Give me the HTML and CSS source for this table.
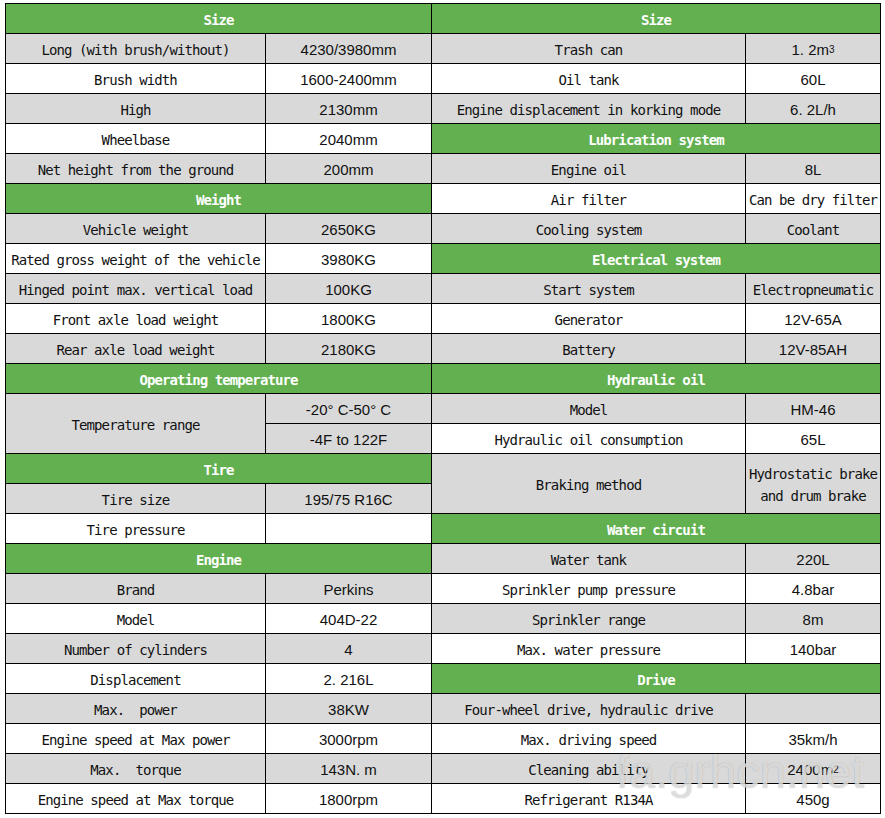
FILE: index.html
```html
<!DOCTYPE html>
<html lang="en">
<head>
<meta charset="utf-8">
<title>Specifications</title>
<link rel="stylesheet" href="styles.css">
</head>
<body>
<div class="sheet">
  <div class="spec spec-left">
    <div class="hd">Size</div>
    <div class="row g"><div class="cell">Long (with brush/without)</div><div class="cell num">4230/3980mm</div></div>
    <div class="row"><div class="cell">Brush width</div><div class="cell num">1600-2400mm</div></div>
    <div class="row g"><div class="cell">High</div><div class="cell num">2130mm</div></div>
    <div class="row"><div class="cell">Wheelbase</div><div class="cell num">2040mm</div></div>
    <div class="row g"><div class="cell">Net height from the ground</div><div class="cell num">200mm</div></div>
    <div class="hd">Weight</div>
    <div class="row g"><div class="cell">Vehicle weight</div><div class="cell num">2650KG</div></div>
    <div class="row"><div class="cell">Rated gross weight of the vehicle</div><div class="cell num">3980KG</div></div>
    <div class="row g"><div class="cell">Hinged point max. vertical load</div><div class="cell num">100KG</div></div>
    <div class="row"><div class="cell">Front axle load weight</div><div class="cell num">1800KG</div></div>
    <div class="row g"><div class="cell">Rear axle load weight</div><div class="cell num">2180KG</div></div>
    <div class="hd">Operating temperature</div>
    <div class="row g"><div class="cell span2">Temperature range</div><div class="cell num">-20° C-50° C</div><div class="cell num">-4F to 122F</div></div>
    <div class="hd">Tire</div>
    <div class="row g"><div class="cell">Tire size</div><div class="cell num">195/75 R16C</div></div>
    <div class="row"><div class="cell">Tire pressure</div><div class="cell"></div></div>
    <div class="hd">Engine</div>
    <div class="row g"><div class="cell">Brand</div><div class="cell num">Perkins</div></div>
    <div class="row"><div class="cell">Model</div><div class="cell num">404D-22</div></div>
    <div class="row g"><div class="cell">Number of cylinders</div><div class="cell num">4</div></div>
    <div class="row"><div class="cell">Displacement</div><div class="cell num">2. 216L</div></div>
    <div class="row g"><div class="cell">Max.  power</div><div class="cell num">38KW</div></div>
    <div class="row"><div class="cell">Engine speed at Max power</div><div class="cell num">3000rpm</div></div>
    <div class="row g"><div class="cell">Max.  torque</div><div class="cell num">143N. m</div></div>
    <div class="row"><div class="cell">Engine speed at Max torque</div><div class="cell num">1800rpm</div></div>
  </div>
  <div class="spec spec-right">
    <div class="hd">Size</div>
    <div class="row g"><div class="cell">Trash can</div><div class="cell num">1. 2m<sup>3</sup></div></div>
    <div class="row"><div class="cell">Oil tank</div><div class="cell num">60L</div></div>
    <div class="row g"><div class="cell">Engine displacement in korking mode</div><div class="cell num">6. 2L/h</div></div>
    <div class="hd">Lubrication system</div>
    <div class="row g"><div class="cell">Engine oil</div><div class="cell num">8L</div></div>
    <div class="row"><div class="cell">Air filter</div><div class="cell">Can be dry filter</div></div>
    <div class="row g"><div class="cell">Cooling system</div><div class="cell">Coolant</div></div>
    <div class="hd">Electrical system</div>
    <div class="row g"><div class="cell">Start system</div><div class="cell">Electropneumatic</div></div>
    <div class="row"><div class="cell">Generator</div><div class="cell num">12V-65A</div></div>
    <div class="row g"><div class="cell">Battery</div><div class="cell num">12V-85AH</div></div>
    <div class="hd">Hydraulic oil</div>
    <div class="row g"><div class="cell">Model</div><div class="cell num">HM-46</div></div>
    <div class="row"><div class="cell">Hydraulic oil consumption</div><div class="cell num">65L</div></div>
    <div class="row g"><div class="cell span2">Braking method</div><div class="cell span2">Hydrostatic brake<br>and drum brake</div></div>
    <div class="hd">Water circuit</div>
    <div class="row g"><div class="cell">Water tank</div><div class="cell num">220L</div></div>
    <div class="row"><div class="cell">Sprinkler pump pressure</div><div class="cell num">4.8bar</div></div>
    <div class="row g"><div class="cell">Sprinkler range</div><div class="cell num">8m</div></div>
    <div class="row"><div class="cell">Max. water pressure</div><div class="cell num">140bar</div></div>
    <div class="hd">Drive</div>
    <div class="row g"><div class="cell">Four-wheel drive, hydraulic drive</div><div class="cell"></div></div>
    <div class="row"><div class="cell">Max. driving speed</div><div class="cell num">35km/h</div></div>
    <div class="row g"><div class="cell">Cleaning ability</div><div class="cell num">2400m<sup>2</sup></div></div>
    <div class="row"><div class="cell">Refrigerant R134A</div><div class="cell num">450g</div></div>
  </div>
  <div class="watermark" aria-hidden="true">fa.grhcn.net</div>
</div>
</body>
</html>
```
FILE: styles.css
```css
html, body {
  margin: 0;
  padding: 0;
  background: #ffffff;
}

.sheet {
  position: relative;
  display: flex;
  align-items: flex-start;
  padding: 3px 0 0 5px;
  width: 885px;
  height: 818px;
  box-sizing: border-box;
  overflow: hidden;
}

.spec {
  display: grid;
  grid-auto-rows: 29px;
  gap: 1px;
  padding: 1px;
  background: #000000;
  font-family: "DejaVu Sans Mono", "Liberation Mono", monospace;
  font-size: 14px;
  letter-spacing: -0.9px;
  color: #111111;
}

.spec-left {
  grid-template-columns: 259px 165px;
}

.spec-right {
  grid-template-columns: 313px 134px;
  margin-left: -1px;
}

.row {
  display: contents;
}

.cell {
  display: flex;
  align-items: center;
  justify-content: center;
  text-align: center;
  background: #ffffff;
  white-space: pre;
  line-height: 22px;
  padding-top: 3px;
  box-sizing: border-box;
  overflow: hidden;
}

.row.g > .cell {
  background: #d9d9d9;
}

.span2 {
  grid-row: span 2;
}

.num {
  font-family: "Liberation Sans Narrow", "Liberation Sans", Arial, sans-serif;
  font-size: 15px;
  letter-spacing: 0;
}

.num sup {
  font-size: 10px;
  line-height: 0;
  vertical-align: 6px;
}

.hd {
  grid-column: 1 / -1;
  display: flex;
  align-items: center;
  justify-content: center;
  padding-top: 3px;
  box-sizing: border-box;
  background: #62b050;
  color: #ffffff;
  font-weight: bold;
}

.watermark {
  position: absolute;
  left: 616px;
  top: 742px;
  font-family: "Liberation Sans", Arial, sans-serif;
  font-size: 47px;
  line-height: 60px;
  letter-spacing: 0;
  color: rgba(242, 242, 242, 0.7);
  text-shadow: 0 0 1px rgba(110, 110, 110, 0.55);
  pointer-events: none;
}
```
